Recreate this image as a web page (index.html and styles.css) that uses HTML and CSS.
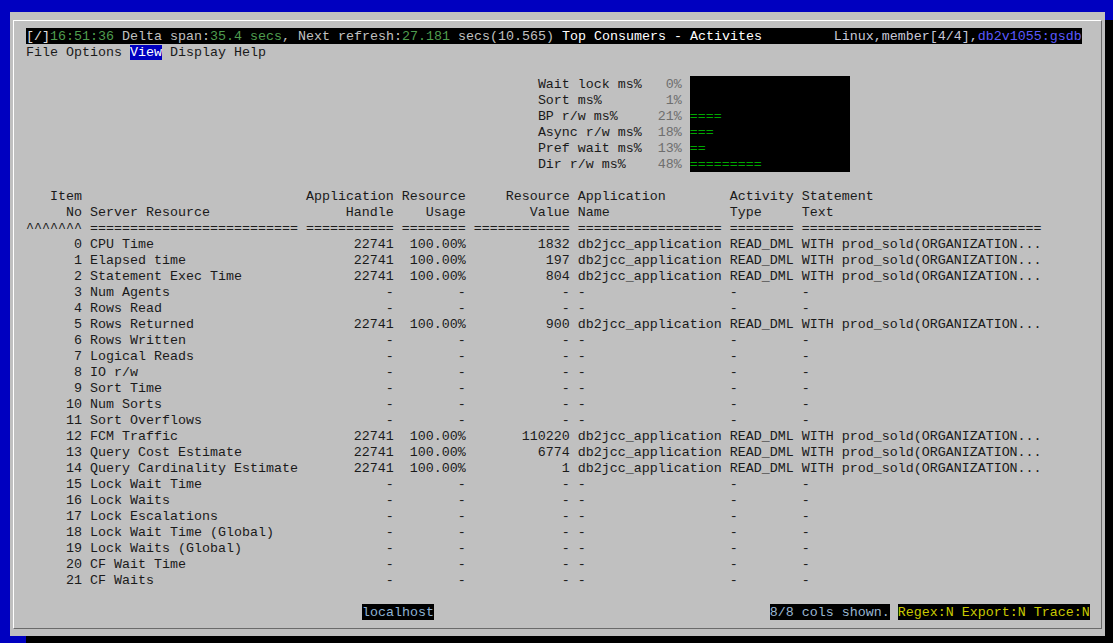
FILE: index.html
```html
<!DOCTYPE html>
<html>
<head>
<meta charset="utf-8">
<title>db2top - Top Consumers</title>
<link rel="stylesheet" href="styles.css">
</head>
<body>
<div class="window">
  <div class="frame">
    <div class="screen">
      <div class="title">
        <span><span class="br">[</span><span class="spin">/</span><span class="br">]</span><span class="grn">16:51:36</span><span class="gry"> Delta span:</span><span class="grn">35.4 secs</span><span class="gry">, Next refresh:</span><span class="grn">27.181</span><span class="gry"> secs(10.565) </span><span class="wht">Top Consumers - Activites</span></span>
        <span><span class="host">Linux,member[4/4],</span><span class="db">db2v1055:gsdb</span></span>
      </div>
      <div class="line">File Options <span class="sel">View</span> Display Help</div>
      <div class="line"></div>

      <div class="gauges">
        <div class="g"><span class="lbl">Wait lock ms%</span><span class="pct">0%</span><span class="bar"></span></div>
        <div class="g"><span class="lbl">Sort ms%</span><span class="pct">1%</span><span class="bar"></span></div>
        <div class="g"><span class="lbl">BP r/w ms%</span><span class="pct">21%</span><span class="bar">====</span></div>
        <div class="g"><span class="lbl">Async r/w ms%</span><span class="pct">18%</span><span class="bar">===</span></div>
        <div class="g"><span class="lbl">Pref wait ms%</span><span class="pct">13%</span><span class="bar">==</span></div>
        <div class="g"><span class="lbl">Dir r/w ms%</span><span class="pct">48%</span><span class="bar">=========</span></div>
      </div>
      <div class="line"></div>

      <div class="table">
        <div class="row"><span class="r">Item</span><span></span><span class="r">Application</span><span class="r">Resource</span><span class="r">Resource</span><span>Application</span><span>Activity</span><span>Statement</span></div>
        <div class="row"><span class="r">No</span><span>Server Resource</span><span class="r">Handle</span><span class="r">Usage</span><span class="r">Value</span><span>Name</span><span>Type</span><span>Text</span></div>
        <div class="row"><span>^^^^^^^</span><span>==========================</span><span>===========</span><span>========</span><span>============</span><span>==================</span><span>========</span><span>==============================</span></div>

        <div class="row"><span class="r">0</span><span>CPU Time</span><span class="r">22741</span><span class="r">100.00%</span><span class="r">1832</span><span>db2jcc_application</span><span>READ_DML</span><span>WITH prod_sold(ORGANIZATION...</span></div>
        <div class="row"><span class="r">1</span><span>Elapsed time</span><span class="r">22741</span><span class="r">100.00%</span><span class="r">197</span><span>db2jcc_application</span><span>READ_DML</span><span>WITH prod_sold(ORGANIZATION...</span></div>
        <div class="row"><span class="r">2</span><span>Statement Exec Time</span><span class="r">22741</span><span class="r">100.00%</span><span class="r">804</span><span>db2jcc_application</span><span>READ_DML</span><span>WITH prod_sold(ORGANIZATION...</span></div>
        <div class="row"><span class="r">3</span><span>Num Agents</span><span class="r">-</span><span class="r">-</span><span class="r">-</span><span>-</span><span>-</span><span>-</span></div>
        <div class="row"><span class="r">4</span><span>Rows Read</span><span class="r">-</span><span class="r">-</span><span class="r">-</span><span>-</span><span>-</span><span>-</span></div>
        <div class="row"><span class="r">5</span><span>Rows Returned</span><span class="r">22741</span><span class="r">100.00%</span><span class="r">900</span><span>db2jcc_application</span><span>READ_DML</span><span>WITH prod_sold(ORGANIZATION...</span></div>
        <div class="row"><span class="r">6</span><span>Rows Written</span><span class="r">-</span><span class="r">-</span><span class="r">-</span><span>-</span><span>-</span><span>-</span></div>
        <div class="row"><span class="r">7</span><span>Logical Reads</span><span class="r">-</span><span class="r">-</span><span class="r">-</span><span>-</span><span>-</span><span>-</span></div>
        <div class="row"><span class="r">8</span><span>IO r/w</span><span class="r">-</span><span class="r">-</span><span class="r">-</span><span>-</span><span>-</span><span>-</span></div>
        <div class="row"><span class="r">9</span><span>Sort Time</span><span class="r">-</span><span class="r">-</span><span class="r">-</span><span>-</span><span>-</span><span>-</span></div>
        <div class="row"><span class="r">10</span><span>Num Sorts</span><span class="r">-</span><span class="r">-</span><span class="r">-</span><span>-</span><span>-</span><span>-</span></div>
        <div class="row"><span class="r">11</span><span>Sort Overflows</span><span class="r">-</span><span class="r">-</span><span class="r">-</span><span>-</span><span>-</span><span>-</span></div>
        <div class="row"><span class="r">12</span><span>FCM Traffic</span><span class="r">22741</span><span class="r">100.00%</span><span class="r">110220</span><span>db2jcc_application</span><span>READ_DML</span><span>WITH prod_sold(ORGANIZATION...</span></div>
        <div class="row"><span class="r">13</span><span>Query Cost Estimate</span><span class="r">22741</span><span class="r">100.00%</span><span class="r">6774</span><span>db2jcc_application</span><span>READ_DML</span><span>WITH prod_sold(ORGANIZATION...</span></div>
        <div class="row"><span class="r">14</span><span>Query Cardinality Estimate</span><span class="r">22741</span><span class="r">100.00%</span><span class="r">1</span><span>db2jcc_application</span><span>READ_DML</span><span>WITH prod_sold(ORGANIZATION...</span></div>
        <div class="row"><span class="r">15</span><span>Lock Wait Time</span><span class="r">-</span><span class="r">-</span><span class="r">-</span><span>-</span><span>-</span><span>-</span></div>
        <div class="row"><span class="r">16</span><span>Lock Waits</span><span class="r">-</span><span class="r">-</span><span class="r">-</span><span>-</span><span>-</span><span>-</span></div>
        <div class="row"><span class="r">17</span><span>Lock Escalations</span><span class="r">-</span><span class="r">-</span><span class="r">-</span><span>-</span><span>-</span><span>-</span></div>
        <div class="row"><span class="r">18</span><span>Lock Wait Time (Global)</span><span class="r">-</span><span class="r">-</span><span class="r">-</span><span>-</span><span>-</span><span>-</span></div>
        <div class="row"><span class="r">19</span><span>Lock Waits (Global)</span><span class="r">-</span><span class="r">-</span><span class="r">-</span><span>-</span><span>-</span><span>-</span></div>
        <div class="row"><span class="r">20</span><span>CF Wait Time</span><span class="r">-</span><span class="r">-</span><span class="r">-</span><span>-</span><span>-</span><span>-</span></div>
        <div class="row"><span class="r">21</span><span>CF Waits</span><span class="r">-</span><span class="r">-</span><span class="r">-</span><span>-</span><span>-</span><span>-</span></div>
      </div>
      <div class="line"></div>

      <div class="status">
        <span class="st-host">localhost</span>
        <span class="st-cols">8/8 cols shown.</span>
        <span class="st-flags">Regex:N Export:N Trace:N</span>
      </div>
    </div>
  </div>
</div>
</body>
</html>
```
FILE: styles.css
```css
html, body {
  margin: 0;
  padding: 0;
}
body {
  background: #0000c0;
  width: 1113px;
  height: 643px;
  overflow: hidden;
}
.window {
  margin: 12px 0 0 10px;
  width: 1095px;
  height: 624px;
  box-sizing: border-box;
  padding: 8px 3px 7px 3px;
  background: #c0c0c0;
  box-shadow: 16px 8px 0 #000;
}
.frame {
  height: 100%;
  box-sizing: border-box;
  border: 1px solid;
  border-color: #ffffff #6a6a6a #6a6a6a #ffffff;
  padding: 7px 0 0 12px;
}
.screen {
  font-family: "Courier New", "Liberation Mono", monospace;
  font-size: 13.3333px;
  line-height: 18px;
  color: #1a1a1a;
  white-space: normal;
}
.line,
.title span,
.g > span,
.row > span,
.status > span {
  white-space: pre;
}
.line {
  height: 16px;
}
.title {
  display: flex;
  justify-content: space-between;
  width: 132ch;
  height: 16px;
  background: #000;
}
.br { color: #e0e0e0; }
.spin { color: #e0e0e0; }
.grn { color: #4f9d4f; }
.gry { color: #c0c0c0; }
.wht { color: #ffffff; }
.host { color: #c8c8d8; }
.db { color: #5a5aff; }
.sel {
  background: #0000c0;
  color: #ffffff;
}
.gauges {
  padding-left: 64ch;
}
.g {
  display: flex;
  height: 16px;
}
.lbl {
  width: 14ch;
}
.pct {
  width: 4ch;
  text-align: right;
  color: #6e6e6e;
  margin-right: 1ch;
}
.bar {
  width: 20ch;
  background: #000;
  color: #00a800;
}
.table {
  display: flex;
  flex-direction: column;
}
.row {
  display: grid;
  grid-template-columns: 7ch 26ch 11ch 8ch 12ch 18ch 8ch 30ch;
  column-gap: 1ch;
  height: 16px;
}
.r {
  text-align: right;
}
.status {
  display: flex;
  height: 16px;
}
.st-host {
  margin-left: 42ch;
  background: #000;
  color: #8fb2d4;
}
.st-cols {
  margin-left: 42ch;
  background: #000;
  color: #9ab6d2;
}
.st-flags {
  margin-left: 1ch;
  background: #000;
  color: #c8c800;
}
```
